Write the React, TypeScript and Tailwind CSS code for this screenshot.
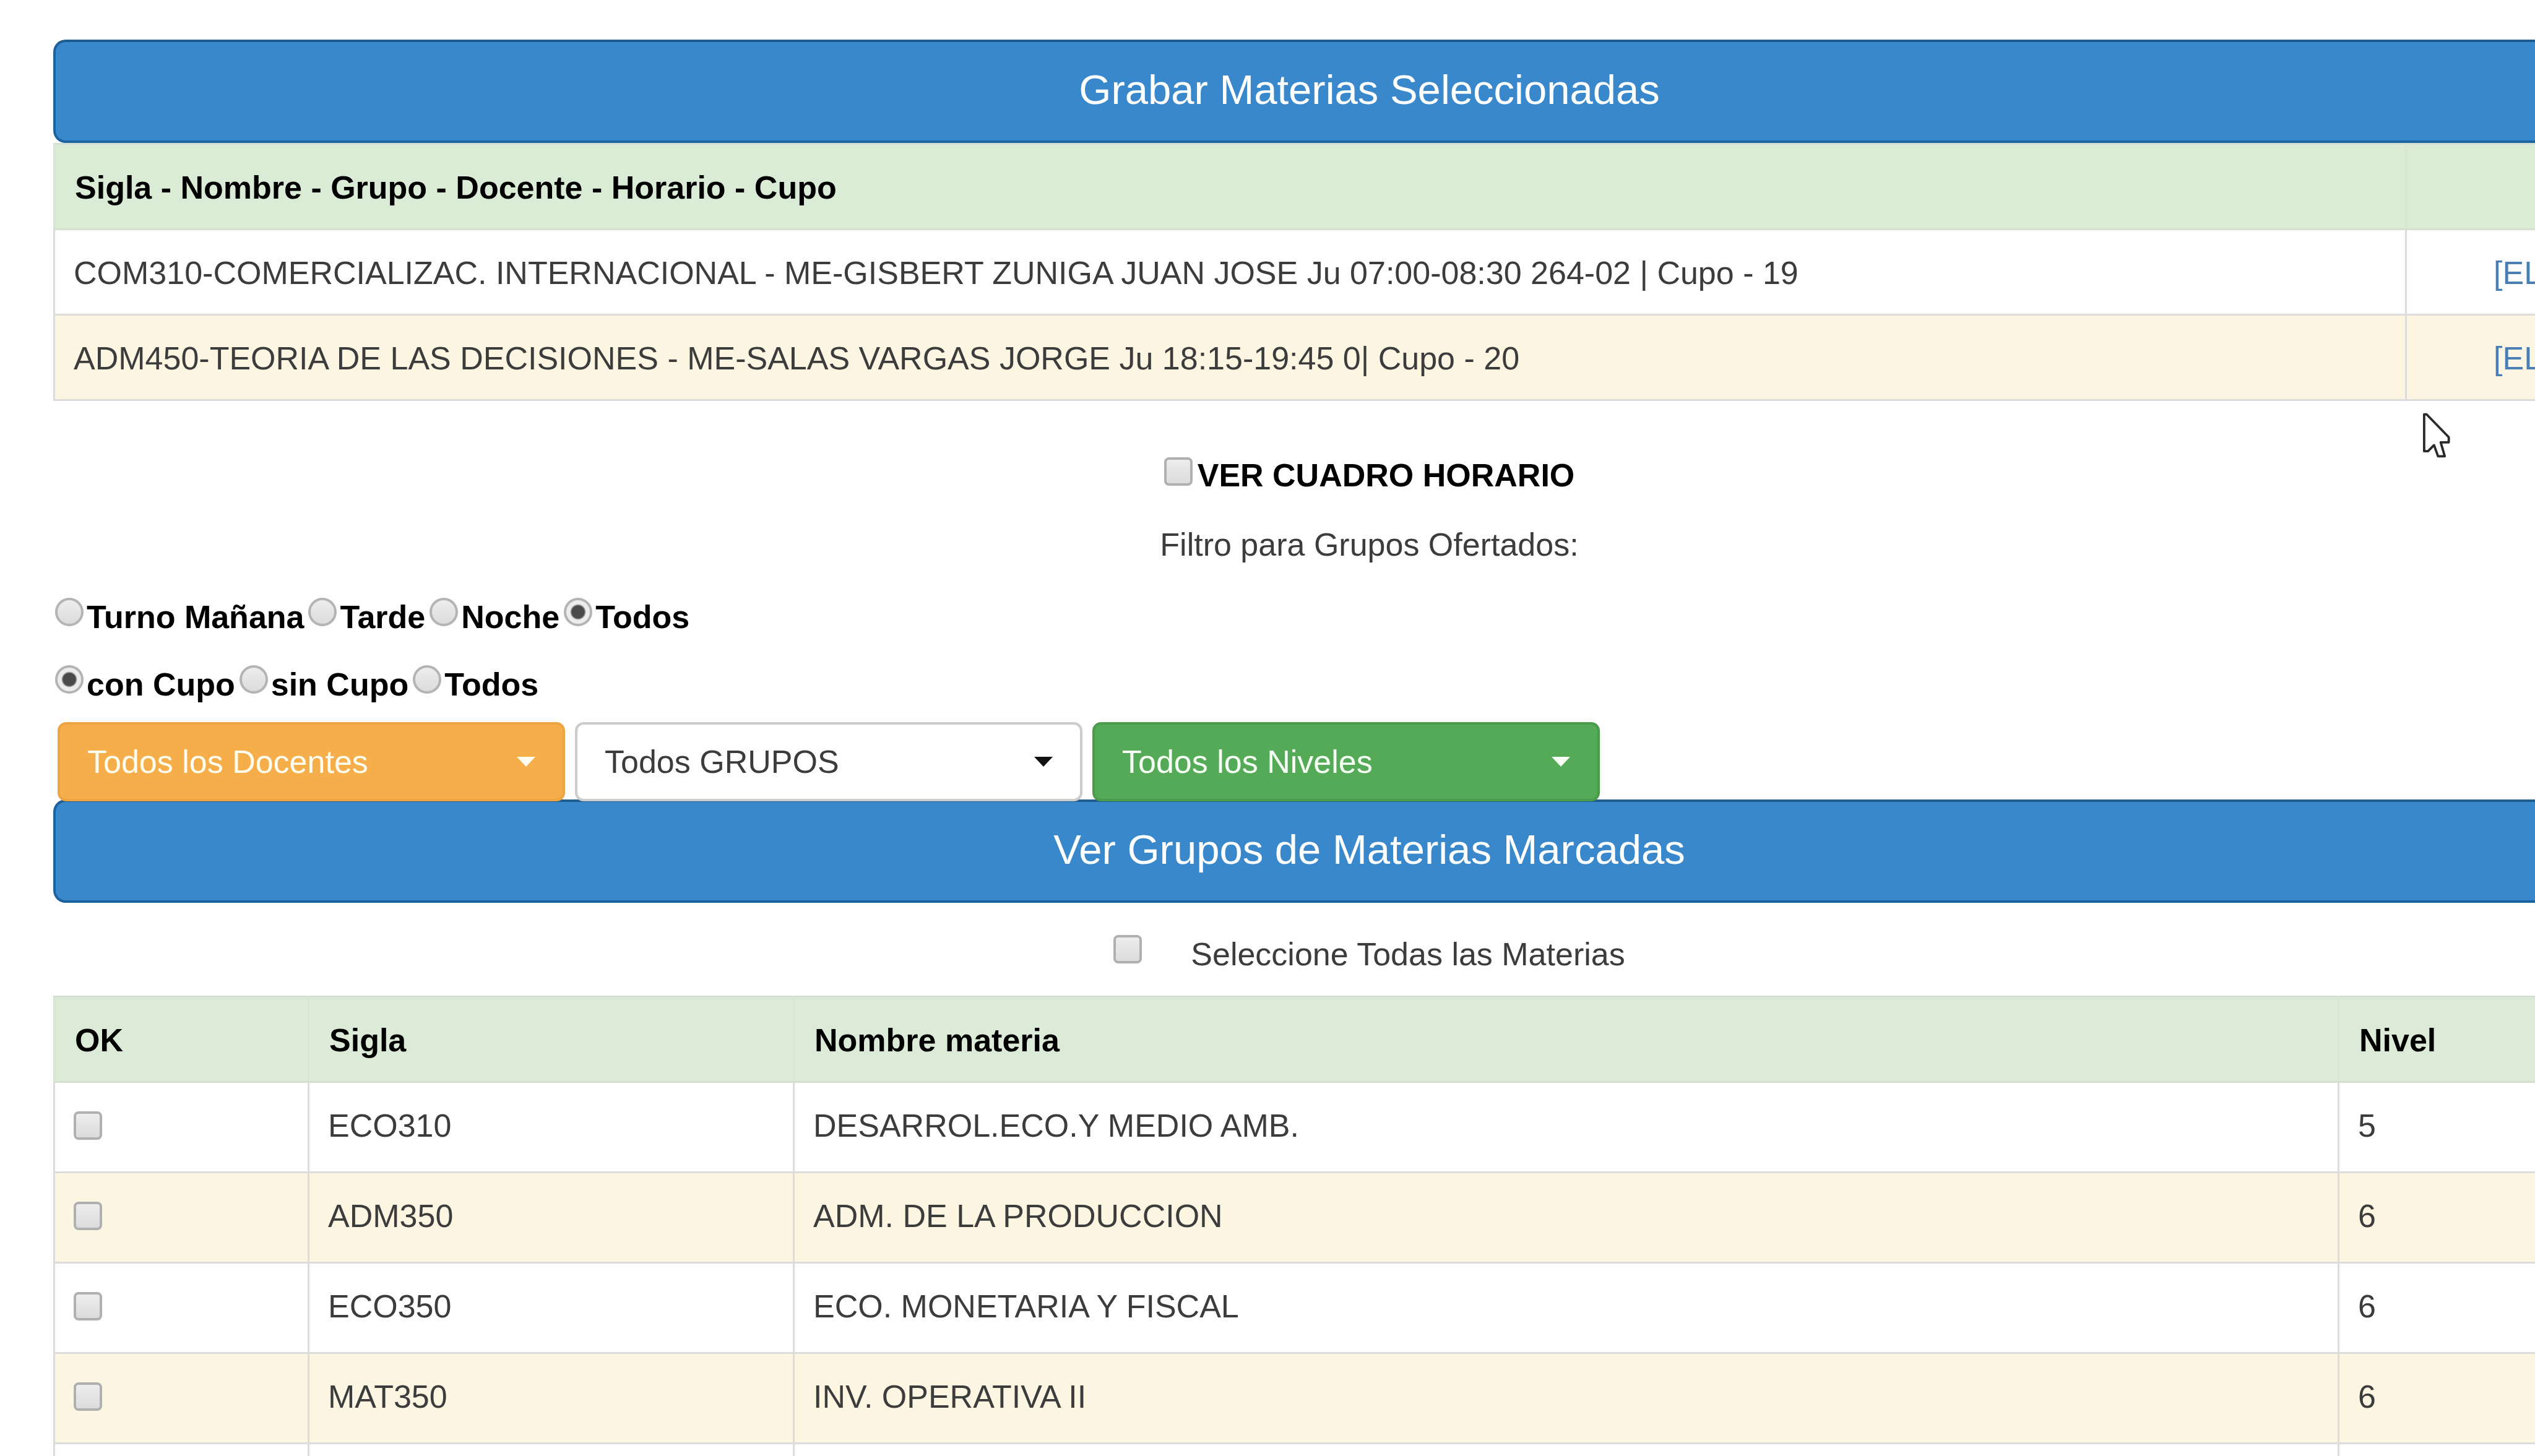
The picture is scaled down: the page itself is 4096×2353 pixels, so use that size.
import type { ReactNode } from "react";

const BOX =
  "block shrink-0 appearance-none w-[46px] h-[46px] border-[4px] border-[#b0b0b0] bg-linear-to-b from-[#ededed] to-[#dcdcdc]";

function CheckBox({ id, label, className = "" }: { id: string; label?: string; className?: string }) {
  return <input type="checkbox" id={id} aria-label={label} className={`${BOX} rounded-[8px] ${className}`} />;
}

function Radio({ name, value, children, checked }: { name: string; value: string; children: ReactNode; checked?: boolean }) {
  const id = `${name}-${value}`;
  return (
    <div className="flex items-start">
      <input
        type="radio"
        id={id}
        name={name}
        defaultChecked={checked}
        className="mt-1.5 mr-[5px] block h-[46px] w-[46px] shrink-0 appearance-none rounded-full border-[4px] border-[#b4b4b4] bg-[linear-gradient(#ededed,#dcdcdc)] checked:bg-[radial-gradient(circle,#4a4a4a_0px,#4a4a4a_10px,#ececec_13px)]"
      />
      <label htmlFor={id} className="font-bold text-black">
        {children}
      </label>
    </div>
  );
}

function BigButton({ children }: { children: ReactNode }) {
  return (
    <button
      type="button"
      className="block w-full rounded-[20px] border-[4px] border-[#1b62a0] border-t-[#1f5c90] bg-[#3a88cc] pt-[39px] pb-[45px] text-center text-[67px] leading-[75px] text-white"
    >
      {children}
    </button>
  );
}

function FilterSelect({ label, tone, caret }: { label: string; tone: string; caret: string }) {
  return (
    <div className="relative w-[820px]">
      <select
        aria-label={label}
        className={`block h-[128px] w-full appearance-none rounded-[14px] border-[4px] pl-[44px] text-[52px] leading-[75px] ${tone}`}
      >
        <option>{label}</option>
      </select>
      <svg
        viewBox="0 0 30 16"
        className={`pointer-events-none absolute top-[56px] right-[48px] h-[16px] w-[30px] ${caret}`}
      >
        <path d="M0 0h30L15 16z" fill="currentColor" />
      </svg>
    </div>
  );
}

const chosen = [
  "COM310-COMERCIALIZAC. INTERNACIONAL - ME-GISBERT ZUNIGA JUAN JOSE Ju 07:00-08:30 264-02 | Cupo - 19",
  "ADM450-TEORIA DE LAS DECISIONES - ME-SALAS VARGAS JORGE Ju 18:15-19:45 0| Cupo - 20",
];

const subjects = [
  ["ECO310", "DESARROL.ECO.Y MEDIO AMB.", "5"],
  ["ADM350", "ADM. DE LA PRODUCCION", "6"],
  ["ECO350", "ECO. MONETARIA Y FISCAL", "6"],
  ["MAT350", "INV. OPERATIVA II", "6"],
  ["", "", ""],
];

const CELL = "border-[3px] border-[#dcdcdc] px-[30px] pt-[32px] pb-[28px] text-left align-top whitespace-nowrap";
const HEAD =
  "border-[3px] border-y-[#d5dfd2] border-x-[#d8e6d3] px-[32px] pt-[32px] pb-[28px] text-left align-top font-bold text-black";

export default function App() {
  return (
    <div className="relative h-screen overflow-hidden bg-[#fefefe] font-['Liberation_Sans',Arial,sans-serif] text-[52px] leading-[75px] text-[#3c3c3c]">
      <main className="mr-[-243px] ml-[86px] pt-16">
        <BigButton>Grabar Materias Seleccionadas</BigButton>

        <table className="w-full table-fixed border-collapse">
          <colgroup>
            <col className="w-[3800px]" />
            <col />
          </colgroup>
          <thead>
            <tr className="bg-[#dbecd6]">
              <th className={HEAD}>Sigla - Nombre - Grupo - Docente - Horario - Cupo</th>
              <th className={HEAD} aria-label="Acciones" />
            </tr>
          </thead>
          <tbody>
            {chosen.map((row) => (
              <tr key={row} className="odd:bg-[#fefefe] even:bg-[#fcf5e2]">
                <td className={CELL}>{row}</td>
                <td className="border-[3px] border-[#dcdcdc] pt-[32px] pb-[28px] pl-[140px] align-top">
                  <a href="#eliminar" className="text-[#4a7fb5]">
                    [ELIMINAR]
                  </a>
                </td>
              </tr>
            ))}
          </tbody>
        </table>

        <div className="mt-[83px] flex items-start justify-center">
          <CheckBox id="cuadro" className="mt-2 mr-2" />
          <label htmlFor="cuadro" className="font-bold text-black">
            VER CUADRO HORARIO
          </label>
        </div>
        <p className="mt-[37px] text-center">Filtro para Grupos Ofertados:</p>

        <div className="mt-[42px] ml-[3px] flex gap-[7px]">
          <Radio name="turno" value="manana">Turno Mañana</Radio>
          <Radio name="turno" value="tarde">Tarde</Radio>
          <Radio name="turno" value="noche">Noche</Radio>
          <Radio name="turno" value="todos" checked>Todos</Radio>
        </div>
        <div className="mt-[34px] ml-[3px] flex gap-[7px]">
          <Radio name="cupo" value="con" checked>con Cupo</Radio>
          <Radio name="cupo" value="sin">sin Cupo</Radio>
          <Radio name="cupo" value="todos">Todos</Radio>
        </div>

        <div className="relative z-10 mt-[23px] ml-[7px] flex gap-4">
          <FilterSelect
            label="Todos los Docentes"
            tone="border-[#eda443] bg-[#f5ae49] text-[#fffdf0]"
            caret="text-[#fffdf0]"
          />
          <FilterSelect
            label="Todos GRUPOS"
            tone="border-[#cccccc] bg-[#fefefe] text-[#3c3c3c]"
            caret="text-[#111111]"
          />
          <FilterSelect
            label="Todos los Niveles"
            tone="border-[#4b9b4d] bg-[#55aa57] text-[#f6fff4]"
            caret="text-[#f6fff4]"
          />
        </div>
        <div className="-mt-[3px]">
          <BigButton>Ver Grupos de Materias Marcadas</BigButton>
        </div>

        <div className="mt-[46px] flex items-start justify-center">
          <CheckBox id="todas" className="mt-1.5 mr-[79px]" />
          <label htmlFor="todas">Seleccione Todas las Materias</label>
        </div>

        <table className="mt-[29px] w-full table-fixed border-collapse">
          <colgroup>
            <col className="w-[411px]" />
            <col className="w-[784px]" />
            <col className="w-[2496px]" />
            <col />
          </colgroup>
          <thead>
            <tr className="bg-[#dcebd8]">
              <th className={HEAD}>OK</th>
              <th className={HEAD}>Sigla</th>
              <th className={HEAD}>Nombre materia</th>
              <th className={HEAD}>Nivel</th>
            </tr>
          </thead>
          <tbody>
            {subjects.map(([code, name, level], i) => (
              <tr key={i} className="h-[146px] odd:bg-[#fefefe] even:bg-[#fcf5e2]">
                <td className={CELL}>
                  <CheckBox id={`materia-${i}`} label={`Seleccionar ${code}`} className="mt-3.5" />
                </td>
                <td className={CELL}>{code}</td>
                <td className={CELL}>{name}</td>
                <td className={CELL}>{level}</td>
              </tr>
            ))}
          </tbody>
        </table>
      </main>

      <svg
        viewBox="135 78 165 270"
        className="pointer-events-none absolute top-[667px] left-[3914px] h-[73px] w-[45px]"
      >
        <path
          d="M145 88V308H168L204 272L228 338H268L244 255H292V224L160 88Z"
          fill="#fefefe"
          stroke="#2a2a2a"
          strokeWidth="14"
          strokeLinejoin="round"
        />
      </svg>
    </div>
  );
}
